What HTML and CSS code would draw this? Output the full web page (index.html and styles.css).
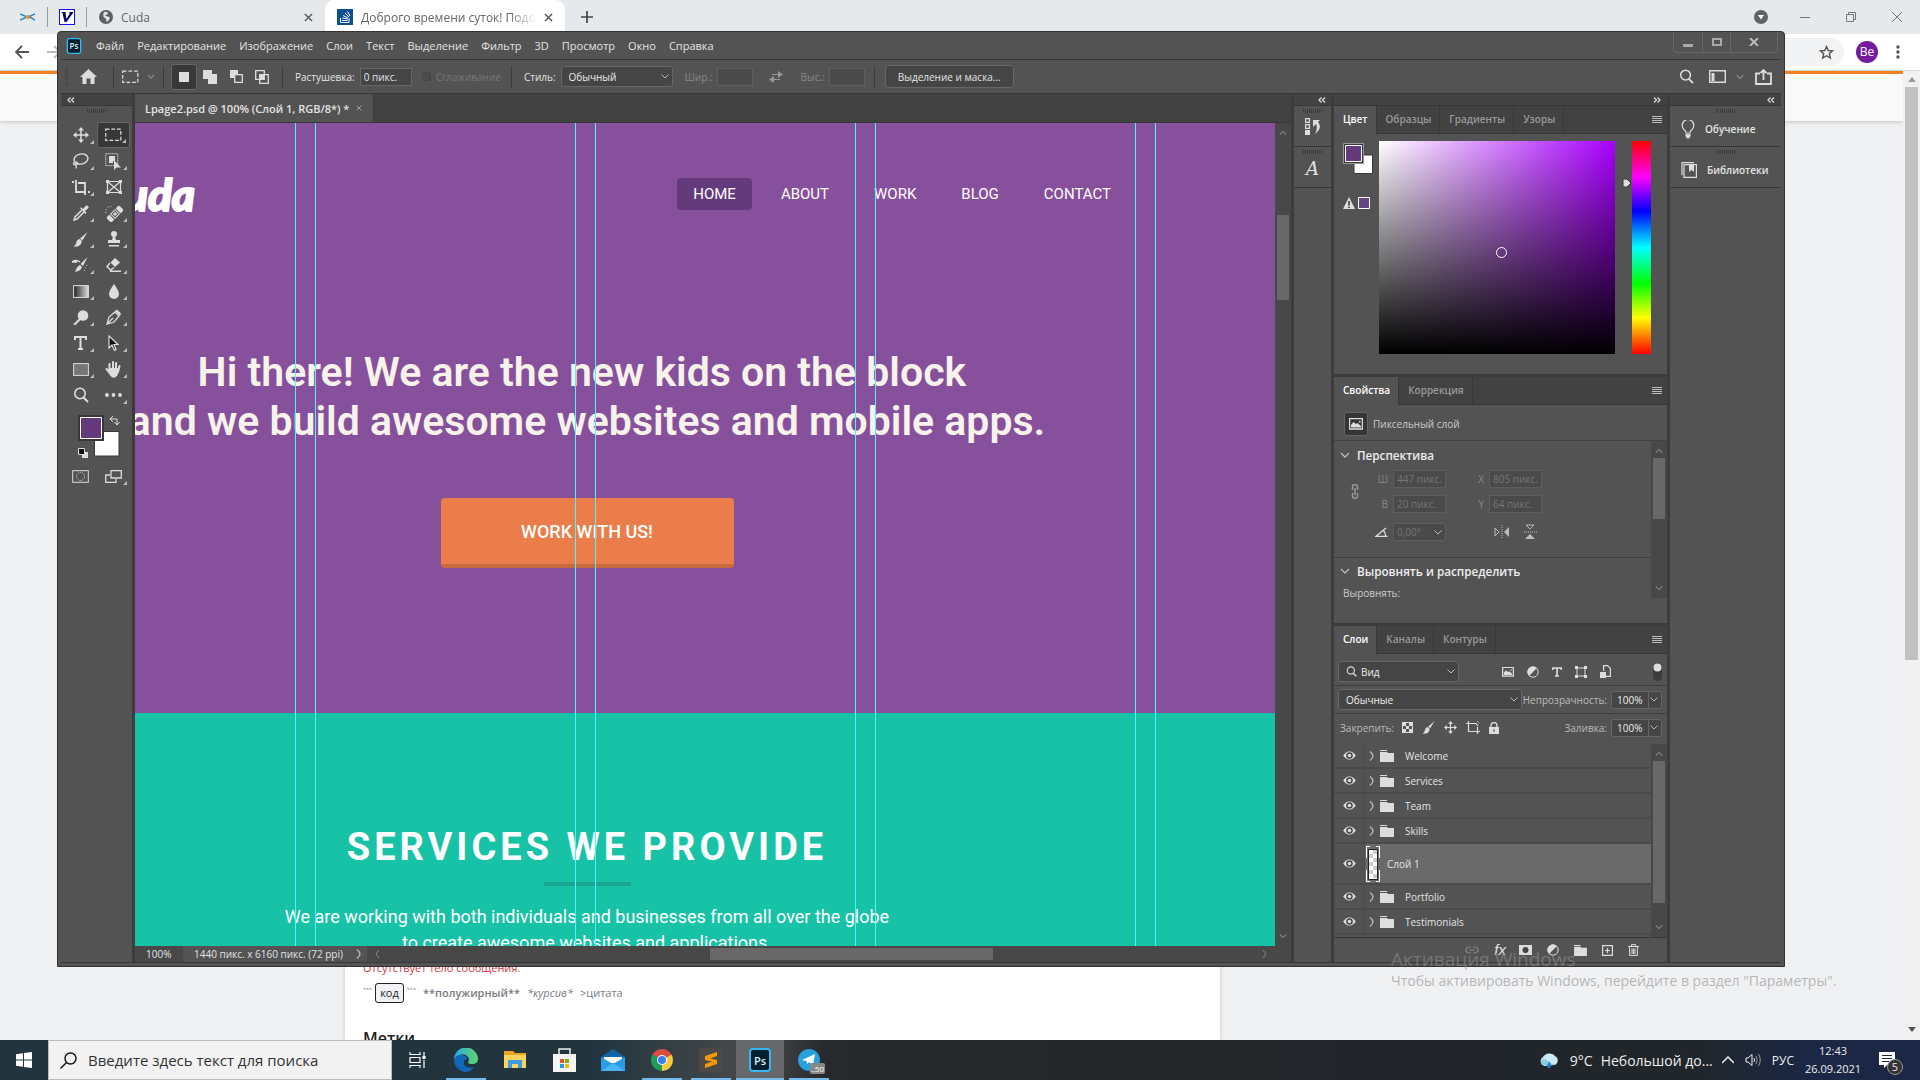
FILE: index.html
```html
<!DOCTYPE html>
<html lang="ru">
<head>
<meta charset="utf-8">
<title>Lpage2.psd</title>
<link rel="stylesheet" href="styles.css">
</head>
<body>
<svg class="defs" aria-hidden="true">
  <defs>
    <symbol id="eye" viewBox="0 0 14 10"><path d="M0 5Q3.500 0 7 .5Q10.500 0 14 5Q10.500 10 7 9.500Q3.500 10 0 5Z" fill="#ddd"/><circle cx="7" cy="5" r="3.600" fill="#454545"/><circle cx="7" cy="5" r="2" fill="#ddd"/></symbol>
    <symbol id="folder" viewBox="0 0 14 12"><path d="M0 0H7V1H0ZM0 2H7L8 3H14V12H0Z" fill="#ddd"/></symbol>
    <symbol id="chev-r" viewBox="0 0 6 10"><path d="M1 .5Q4 3 4 5Q4 7 1 9.500" fill="none" stroke="#bbb" stroke-width="1.300"/></symbol>
    <symbol id="chev-d" viewBox="0 0 10 6"><path d="M1 1L5 5L9 1" fill="none" stroke="currentColor" stroke-width="1.300"/></symbol>
    <symbol id="chev-u" viewBox="0 0 10 6"><path d="M1 5L5 1L9 5" fill="none" stroke="currentColor" stroke-width="1.300"/></symbol>
    <symbol id="dbl-l" viewBox="0 0 8 6"><path d="M3.500 .5L1 3L3.500 5.500M7 .5L4.500 3L7 5.500" fill="none" stroke="#ddd" stroke-width="1.300"/></symbol>
    <symbol id="dbl-r" viewBox="0 0 8 6"><path d="M1 .5L3.500 3L1 5.500M4.500 .5L7 3L4.500 5.500" fill="none" stroke="#ddd" stroke-width="1.300"/></symbol>
    <symbol id="burger" viewBox="0 0 10 8"><path d="M0 .5H10M0 2.500H10M0 4.500H10M0 6.500H10" stroke="#bbb"/></symbol>
    <symbol id="marquee" viewBox="0 0 18 14"><rect x=".75" y=".75" width="16" height="12" fill="none" stroke="#ddd" stroke-width="1.300" stroke-dasharray="4 2"/></symbol>
    <symbol id="brush" viewBox="0 0 16 16"><path d="M15.500 0L10 9L7.500 7ZM7 7.500L9.500 9.700Q9 14 5 15.500L.5 15.800Q3 14 3.500 11.500Q4 8 7 7.500Z" fill="#ddd"/></symbol>
    <symbol id="move" viewBox="0 0 16 16"><path d="M8 2V14M2 8H14" stroke="#ddd" stroke-width="1.500"/><path d="M8 0L11 3.500H5ZM8 16L11 12.500H5ZM0 8L3.500 5V11ZM16 8L12.500 5V11Z" fill="#ddd"/></symbol>
    <symbol id="picture" viewBox="0 0 14 12"><path d="M.5 .5H13.500V11H.5Z" fill="none" stroke="#ddd" stroke-width="1.500"/><path d="M2 9.500V7L4.500 4L7 6L8.500 5L12 8V9.500ZM10 3H11.500V4.500H10Z" fill="#ddd"/></symbol>
    <symbol id="half" viewBox="0 0 12 12"><circle cx="6" cy="6" r="5.200" fill="none" stroke="#ddd"/><path d="M9.900 2.100A5.500 5.500 0 0 0 2.100 9.900Z" fill="#ddd"/></symbol>
    <symbol id="search" viewBox="0 0 16 16"><circle cx="7" cy="6.500" r="5.200" fill="none" stroke="currentColor" stroke-width="1.600"/><path d="M10.500 10.500L15 15" stroke="currentColor" stroke-width="2"/></symbol>
    <symbol id="x" viewBox="0 0 10 10"><path d="M1 1L9 9M9 1L1 9" stroke="currentColor" stroke-width="1.500"/></symbol>
    <symbol id="ps" viewBox="0 0 22 24"><rect x="1" y="1" width="20" height="22" rx="3" fill="#001e2b" stroke="#31b8f5" stroke-width="2"/></symbol>
  </defs>
</svg>

<div class="desktop">
  <main class="browser">
    <div class="tabstrip">
      <span class="pin pin-first"><svg width="15" height="10" viewBox="0 0 15 10"><path d="M0 2L6 4.500M0 8L6 5.500" stroke="#2c8ac7" stroke-width="1.500"/><path d="M15 2L9 4.500L15 8" stroke="#2c8ac7" stroke-width="1.500" fill="none"/><circle cx="8" cy="5" r="2" fill="#ee8a2c"/></svg></span>
      <span class="pin"><svg width="16" height="16" viewBox="0 0 16 16"><rect x=".5" y=".5" width="15" height="15" fill="#fff" stroke="#11e"/><path d="M2 3H7L6.500 4L7.500 10L11 4L9.500 3H14V4L7.500 13H5.500L3.500 4Z" fill="#007"/></svg></span>
      <a class="tab" href="#cuda"><svg width="14" height="14" viewBox="0 0 14 14"><circle cx="7" cy="7" r="7" fill="#5b5f63"/><path d="M5 2Q9 1 9 4Q6 5 6 6Q10 6 11 8Q10 11 7 12Q8 9 6 8Q3 7 5 2Z" fill="#dfe3e6"/></svg><span class="tab-title">Cuda</span><svg class="tab-x" width="9" height="9"><use href="#x"/></svg></a>
      <a class="tab tab-active" href="#so"><svg width="16" height="16" viewBox="0 0 16 16"><rect width="16" height="16" fill="#0a5194"/><path d="M3.500 9V13.500H12V9M5 11.500H10.500M5.200 9L10.700 10M6 6.500L11 9M8 4L12 8M10.500 2.500L13 7" stroke="#fff" fill="none"/></svg><span class="tab-title fade">Доброго времени суток! Подска</span><svg class="tab-x" width="9" height="9"><use href="#x"/></svg></a>
      <button class="new-tab" aria-label="Новая вкладка"><svg width="12" height="12" viewBox="0 0 12 12"><path d="M6 0V12M0 6H12" stroke="#444" stroke-width="1.700"/></svg></button>
      <div class="win-controls">
        <svg width="14" height="14" viewBox="0 0 14 14"><circle cx="7" cy="7" r="7" fill="#5f6368"/><path d="M4 5H10L7 9.500Z" fill="#fff"/></svg>
        <svg width="10" height="10" viewBox="0 0 10 10"><path d="M0 5.500H10" stroke="#777"/></svg>
        <svg width="10" height="10" viewBox="0 0 10 10"><path d="M.5 2.500H7.500V9.500H.5ZM2.500 2.500V.5H9.500V7.500H7.500" fill="none" stroke="#777"/></svg>
        <svg width="10" height="10" viewBox="0 0 10 10"><path d="M0 0L10 10M10 0L0 10" stroke="#777"/></svg>
      </div>
    </div>
    <div class="toolbar">
      <svg width="14" height="14" viewBox="0 0 14 14"><path d="M14 7H1.500M7 1L1 7L7 13" fill="none" stroke="#555" stroke-width="1.800"/></svg>
      <svg width="14" height="14" viewBox="0 0 14 14"><path d="M0 7H12.500M7 1L13 7L7 13" fill="none" stroke="#bbb" stroke-width="1.800"/></svg>
      <div class="omnibox"><svg width="15" height="15" viewBox="0 0 15 15"><path d="M7.500 1.500L9.200 5.500L13.500 5.900L10.300 8.700L11.300 13L7.500 10.700L3.700 13L4.700 8.700L1.500 5.900L5.800 5.500Z" fill="none" stroke="#555" stroke-width="1.400"/></svg></div>
      <span class="avatar">Be</span>
      <svg width="4" height="14" viewBox="0 0 4 14"><g fill="#555"><circle cx="2" cy="2" r="1.700"/><circle cx="2" cy="7" r="1.700"/><circle cx="2" cy="12" r="1.700"/></g></svg>
    </div>
    <div class="viewport">
      <div class="site">
        <div class="site-bar"></div>
        <article class="post">
          <p class="error">Отсутствует тело сообщения.</p>
          <p class="hints"><span>```</span><kbd>код</kbd><span>```</span><b>**полужирный**</b><i>*курсив*</i><span>&gt;цитата</span></p>
          <h2>Метки</h2>
        </article>
      </div>
      <div class="scroll"><span class="arr-up"></span><span class="scroll-thumb"></span><span class="arr-down"></span></div>
    </div>
  </main>

  <footer class="taskbar">
    <button class="start" aria-label="Пуск"><svg width="16" height="16" viewBox="0 0 16 16"><path d="M0 2.300L7 1.300V7.500H0ZM8 1.100L16 0V7.500H8ZM0 8.500H7V14.700L0 13.700ZM8 8.500H16V16L8 14.900Z" fill="#fff"/></svg></button>
    <label class="search"><svg width="17" height="17" viewBox="0 0 17 17"><circle cx="10.500" cy="6.500" r="5.500" fill="none" stroke="#111" stroke-width="1.400"/><path d="M6.500 10.500L.5 16.500" stroke="#111" stroke-width="1.400"/></svg><input type="text" placeholder="Введите здесь текст для поиска" aria-label="Поиск"></label>
    <div class="apps">
      <button class="app" aria-label="Задачи"><svg width="17" height="16" viewBox="0 0 17 16"><path d="M1 0V3M11 0V3M1 2.500H11M1 5.500H11V10.500H1ZM1 16V13.500H11V16M15 0V4M15 8V16" fill="none" stroke="#fff" stroke-width="1.200"/><path d="M13.500 4H16.500V7H13.500Z" fill="#fff"/></svg></button>
      <button class="app run" aria-label="Edge"><svg width="24" height="24" viewBox="0 0 24 24"><defs><linearGradient id="eg" x2="1"><stop stop-color="#2aa8e6"/><stop offset="1" stop-color="#60d66a"/></linearGradient></defs><path d="M0 12A12 12 0 0 1 24 11Q24 16 18 16Q14 16 14 14Q16 12 14 9Q11 5 6 7Q1 9 0 12Z" fill="url(#eg)"/><path d="M0 12Q2 6 9 7Q13 8 13 11Q9 12 10 16Q12 21 20 19Q17 24 11 24Q1 22 0 12Z" fill="#1268b8"/></svg></button>
      <button class="app" aria-label="Проводник"><svg width="22" height="20" viewBox="0 0 22 20"><path d="M0 1H9L11 3H22V18H0Z" fill="#e8a520"/><path d="M0 5H22V18H0Z" fill="#fcd462"/><path d="M4 18V10H18V18H14V14H8V18Z" fill="#3f9be0"/></svg></button>
      <button class="app" aria-label="Магазин"><svg width="23" height="24" viewBox="0 0 23 24"><path d="M6 6V1H17V6" fill="none" stroke="#eee" stroke-width="1.500"/><path d="M0 6H23V24H0Z" fill="#f4f4f4"/><path d="M7 11H11V15H7Z" fill="#e94f2e"/><path d="M12 11H16V15H12Z" fill="#7db700"/><path d="M7 16H11V20H7Z" fill="#1a9fe8"/><path d="M12 16H16V20H12Z" fill="#fcb900"/></svg></button>
      <button class="app" aria-label="Почта"><svg width="24" height="22" viewBox="0 0 24 22"><path d="M0 8L12 0L24 8V22H0Z" fill="#1465a8"/><path d="M3 8H21V14H3Z" fill="#fff"/><path d="M0 8L12 15L24 8V22H0Z" fill="#2b9de6"/><path d="M0 22L12 14L24 22Z" fill="#48b5f0"/></svg></button>
      <button class="app run" aria-label="Chrome"><svg width="22" height="22" viewBox="0 0 22 22"><path d="M11 11L1.500 5.500A11 11 0 0 1 20.500 5.500Z" fill="#dd4b3e"/><path d="M11 11L20.500 5.500A11 11 0 0 1 11 22Z" fill="#fccb3c"/><path d="M11 11L11 22A11 11 0 0 1 1.500 5.500Z" fill="#1f9d58"/><circle cx="11" cy="11" r="5" fill="#fff"/><circle cx="11" cy="11" r="4" fill="#3c7ff0"/></svg></button>
      <button class="app run" aria-label="Sublime"><svg width="24" height="24" viewBox="0 0 24 24"><rect width="24" height="24" rx="2" fill="#4a4a4a"/><path d="M6 8L18 4V8L11 10.500L18 12V16L6 20V16L13 13.500L6 12Z" fill="#ff9800"/></svg></button>
      <button class="app run current" aria-label="Photoshop"><span class="ps-logo"><svg width="22" height="24"><use href="#ps"/></svg><span class="ps-text">Ps</span></span></button>
      <button class="app run" aria-label="Telegram"><svg width="22" height="22" viewBox="0 0 22 22"><circle cx="11" cy="11" r="11" fill="#2aa0dc"/><path d="M4 11L17 5L15 16L11 13L9 15L8.500 12Z" fill="#fff"/></svg><span class="count">..50</span></button>
    </div>
    <div class="tray">
      <svg width="21" height="18" viewBox="0 0 21 18"><path d="M5 15A5 5 0 0 1 4 6A7 6 0 0 1 16 5A5 5 0 0 1 16 14Z" fill="#c9e9f5"/><path d="M3 14A4 4 0 0 1 4 8Q8 8 9 11L17 14Z" fill="#8ec9e4"/><path d="M10 10Q13 14 11 17Q8 17 8 15Z" fill="#1b7fd1"/></svg>
      <span class="temp">9°C</span><span class="weather">Небольшой до...</span>
      <svg class="up" width="12" height="8" viewBox="0 0 12 8"><path d="M0 7L6 1L12 7" fill="none" stroke="#eee" stroke-width="1.500"/></svg>
      <svg width="17" height="14" viewBox="0 0 17 14"><path d="M1 5H3L7 1.500V12.500L3 9H1Z" fill="none" stroke="#eee"/><path d="M9 5Q10 7 9 9" fill="none" stroke="#eee"/><path d="M11 3Q13.500 7 11 11M13.500 1Q17 7 13.500 13" fill="none" stroke="#999"/></svg>
      <span class="lang">РУС</span>
      <span class="clock"><span>12:43</span><span>26.09.2021</span></span>
      <span class="notify"><svg width="16" height="16" viewBox="0 0 16 16"><path d="M0 0H16V13H8L5 16V13H0Z" fill="#fff"/><path d="M3 3.500H13M3 6.500H13M3 9.500H10" stroke="#1b2540" stroke-width="1.200"/></svg><span class="badge">5</span></span>
    </div>
  </footer>

  <section class="ps">
    <header class="menubar">
      <span class="ps-logo small"><svg width="16" height="16"><use href="#ps"/></svg><span class="ps-text">Ps</span></span>
      <nav class="menu"><a href="#f">Файл</a><a href="#e">Редактирование</a><a href="#i">Изображение</a><a href="#l">Слои</a><a href="#t">Текст</a><a href="#s">Выделение</a><a href="#fi">Фильтр</a><a href="#d">3D</a><a href="#v">Просмотр</a><a href="#w">Окно</a><a href="#h">Справка</a></nav>
      <div class="ps-win">
        <button aria-label="Свернуть"><svg width="10" height="10" viewBox="0 0 10 10"><path d="M0 7H10V10H0Z" fill="#aaa"/></svg></button>
        <button aria-label="Развернуть"><svg width="10" height="8" viewBox="0 0 10 8"><path d="M1 1H9V7H1Z" fill="none" stroke="#aaa" stroke-width="2"/></svg></button>
        <button class="wide" aria-label="Закрыть"><svg width="10" height="8" viewBox="0 0 10 8"><path d="M1 0L9 8M9 0L1 8" stroke="#bbb" stroke-width="2"/></svg></button>
      </div>
    </header>
    <div class="options">
      <span class="vgrip"></span>
      <button class="icon-btn home" aria-label="Домой"><svg width="17" height="15" viewBox="0 0 17 15"><path d="M8.500 0L17 8H14.500V15H10.500V9.500H6.500V15H2.500V8H0Z" fill="#ddd"/></svg></button>
      <span class="sep"></span>
      <button class="icon-btn mar" aria-label="Область"><svg width="17" height="14"><use href="#marquee"/></svg><svg class="dim" width="8" height="5"><use href="#chev-d"/></svg></button>
      <span class="sep"></span>
      <div class="modes">
        <button class="on" aria-label="Новая"><svg width="10" height="10"><rect width="10" height="10" fill="#ddd"/></svg></button>
        <button aria-label="Добавить"><svg width="14" height="14" viewBox="0 0 14 14"><path d="M0 0H9V4H14V14H5V9H0Z" fill="#ddd"/></svg></button>
        <button aria-label="Вычесть"><svg width="13" height="13" viewBox="0 0 13 13"><path d="M0 0H8V4H4V8H0Z" fill="#ddd"/><path d="M4.700 4.700H12.300V12.300H4.700Z" fill="none" stroke="#ddd" stroke-width="1.300"/></svg></button>
        <button aria-label="Пересечение"><svg width="14" height="14" viewBox="0 0 14 14"><path d="M.7 .7H9.300V9.300H.7ZM4.700 4.700H13.300V13.300H4.700Z" fill="none" stroke="#ddd" stroke-width="1.300"/><path d="M5 5H9V9H5Z" fill="#ddd"/></svg></button>
      </div>
      <span class="sep"></span>
      <label class="opt">Растушевка:<input class="field w52" type="text" value="0 пикс."></label>
      <label class="opt smooth"><input type="checkbox" disabled>Сглаживание</label>
      <span class="sep"></span>
      <label class="opt">Стиль:<select class="drop w112"><option>Обычный</option></select></label>
      <label class="opt off">Шир.:<input class="field w36" type="text" disabled></label>
      <svg class="swap" width="14" height="12" viewBox="0 0 14 12"><path d="M3 3H9V0L14 3.500L9 7V4H3ZM11 8H5V5L0 8.500L5 12V9H11Z" fill="#999"/></svg>
      <label class="opt off">Выс.:<input class="field w36" type="text" disabled></label>
      <span class="sep"></span>
      <button class="mask">Выделение и маска...</button>
      <div class="opt-right">
        <svg width="15" height="15"><use href="#search"/></svg>
        <svg width="17" height="13" viewBox="0 0 17 13"><path d="M.7 .7H16.300V12.300H.7Z" fill="none" stroke="#ddd" stroke-width="1.400"/><path d="M2.500 3H5.500V11H2.500Z" fill="#ddd"/></svg>
        <svg class="dim ws" width="8" height="6"><use href="#chev-d"/></svg>
        <svg width="17" height="16" viewBox="0 0 17 16"><path d="M5 4.500H1V15H16V4.500H12M8.500 11V2M5.500 4L8.500 1L11.500 4" fill="none" stroke="#ddd" stroke-width="1.800"/></svg>
      </div>
    </div>

    <div class="work">
      <aside class="tools">
        <div class="collapse left"><svg width="8" height="6"><use href="#dbl-l"/></svg></div>
        <div class="grip"></div>
        <div class="toolgrid">
          <button class="tool" aria-label="Перемещение"><svg width="16" height="16"><use href="#move"/></svg></button>
          <button class="tool on" aria-label="Прямоугольная область"><svg width="17" height="14"><use href="#marquee"/></svg></button>
          <button class="tool" aria-label="Лассо"><svg width="17" height="16" viewBox="0 0 17 16"><ellipse cx="9" cy="6" rx="7" ry="5" transform="rotate(-12 9 6)" fill="none" stroke="#ddd" stroke-width="1.400"/><path d="M2 9Q0 12 4 12Q6 12 5 9Q3 9 3 12Q5 13 4 15.500" fill="none" stroke="#ddd" stroke-width="1.200"/></svg></button>
          <button class="tool" aria-label="Выделение объектов"><svg width="17" height="17" viewBox="0 0 17 17"><rect x=".7" y=".7" width="12" height="12" fill="none" stroke="#ddd" stroke-width="1.200" stroke-dasharray="1 1"/><path d="M4 3H10V8H8V10H4Z" fill="#ddd"/><path d="M9 7V17L11.500 14.500H16Z" fill="#ddd"/></svg></button>
          <button class="tool" aria-label="Рамка"><svg width="18" height="15" viewBox="0 0 18 15"><path d="M0 2H2M4 0V12H14M6 3H13V15M16 12H18" fill="none" stroke="#ddd" stroke-width="1.800"/></svg></button>
          <button class="tool plain" aria-label="Кадр"><svg width="16" height="14" viewBox="0 0 16 14"><path d="M1.500 1.500H14.500V12.500H1.500ZM1.500 1.500L14.500 12.500M14.500 1.500L1.500 12.500" fill="none" stroke="#ddd" stroke-width="1.200"/><path d="M0 0H3V3H0ZM13 0H16V3H13ZM0 11H3V14H0ZM13 11H16V14H13Z" fill="#ddd"/></svg></button>
          <button class="tool" aria-label="Пипетка"><svg width="16" height="16" viewBox="0 0 16 16"><path d="M9 5L2 12L1 15L4 14L11 7" fill="none" stroke="#ddd" stroke-width="1.500"/><path d="M7 3L8.500 2.500L10 4L13 .5Q16 0 15.500 3L12 6L13.500 7.500L12.500 9Z" fill="#ddd"/></svg></button>
          <button class="tool" aria-label="Восстановление"><svg width="18" height="17" viewBox="0 0 18 17"><g transform="rotate(-45 10 9)"><rect x="1" y="5.500" width="18" height="7" rx="1.500" fill="#ddd"/><path d="M6 5V13M14 5V13" stroke="#535353"/><path d="M8 7H12V11H8Z" fill="none" stroke="#535353"/></g><path d="M1 8Q0 1 7 1.500" fill="none" stroke="#ddd" stroke-dasharray="1 1.500"/></svg></button>
          <button class="tool" aria-label="Кисть"><svg width="15" height="15"><use href="#brush"/></svg></button>
          <button class="tool" aria-label="Штамп"><svg width="14" height="16" viewBox="0 0 14 16"><circle cx="7" cy="3" r="3" fill="#ddd"/><path d="M6 5H8L9 9H13V12H1V9H5ZM2 14H12V15.500H2Z" fill="#ddd"/></svg></button>
          <button class="tool" aria-label="Архивная кисть"><svg width="17" height="16" viewBox="0 0 17 16"><path d="M15.500 0L11 9L8.500 7ZM8 8L10 10Q9 14 3 15Q5 9 8 8Z" fill="#ddd"/><path d="M0 5Q4 2 8 5M0 5H5" fill="none" stroke="#ddd" stroke-width="1.500"/><path d="M12 14L16 6" stroke="#ddd" stroke-dasharray="1 2"/></svg></button>
          <button class="tool" aria-label="Ластик"><svg width="16" height="14" viewBox="0 0 16 14"><path d="M9 0L14 4.500L9 9L4.500 4.500Z" fill="#ddd"/><path d="M4 5L1 8.500L4.500 12L8 9.500M4 13.300H15" fill="none" stroke="#ddd" stroke-width="1.400"/></svg></button>
          <button class="tool" aria-label="Градиент"><svg width="16" height="13" viewBox="0 0 16 13"><defs><linearGradient id="gr"><stop stop-color="#222"/><stop offset="1" stop-color="#ddd"/></linearGradient></defs><rect x=".6" y=".6" width="14.800" height="11.800" fill="url(#gr)" stroke="#ddd"/></svg></button>
          <button class="tool" aria-label="Размытие"><svg width="12" height="15" viewBox="0 0 12 15"><path d="M6 0Q11 7 11 10A5 5 0 0 1 1 10Q1 7 6 0Z" fill="#ddd"/></svg></button>
          <button class="tool" aria-label="Осветлитель"><svg width="16" height="15" viewBox="0 0 16 15"><circle cx="10" cy="5.500" r="5.300" fill="#ddd"/><path d="M7 9L1 15" stroke="#ddd" stroke-width="2"/></svg></button>
          <button class="tool" aria-label="Перо"><svg width="16" height="16" viewBox="0 0 16 16"><path d="M1 15L3 8L9 3L13 7L8 13ZM1 15L7 9" fill="none" stroke="#ddd" stroke-width="1.300"/><path d="M9 2L11 .5L15 4.500L14 7Z" fill="#ddd"/></svg></button>
          <button class="tool" aria-label="Текст"><svg width="13" height="14" viewBox="0 0 13 14"><path d="M1 4V1H12V4M6.500 1V13M4 13H9" fill="none" stroke="#ddd" stroke-width="2"/></svg></button>
          <button class="tool" aria-label="Стрелка"><svg width="11" height="16" viewBox="0 0 11 16"><path d="M1 1V13L4 10L6.500 15.500L8 14.500L6 9.500H10Z" fill="#111" stroke="#ddd" stroke-width="1.200"/></svg></button>
          <button class="tool" aria-label="Прямоугольник"><svg width="16" height="13" viewBox="0 0 16 13"><rect x=".6" y=".6" width="14.800" height="11.800" fill="#777" stroke="#ddd"/></svg></button>
          <button class="tool" aria-label="Рука"><svg width="17" height="17" viewBox="0 0 17 17"><path d="M4.500 3V10M8 1V9M11 2V9M14.500 5L13 11M1.500 8L5 12" stroke="#ddd" stroke-width="2" stroke-linecap="round"/><path d="M4 7H14L13 13Q12 16 10 16.500H7Q5 15 3 11Z" fill="#ddd"/></svg></button>
          <button class="tool plain" aria-label="Масштаб"><svg width="16" height="16"><use href="#search" color="#ddd"/></svg></button>
          <button class="tool" aria-label="Ещё"><svg width="17" height="4" viewBox="0 0 17 4"><g fill="#ddd"><circle cx="2" cy="2" r="1.900"/><circle cx="8.500" cy="2" r="1.900"/><circle cx="15" cy="2" r="1.900"/></g></svg></button>
        </div>
        <svg class="swatches" width="42" height="46" viewBox="0 0 42 46"><path d="M16.500 17.500H41V42H16.500Z" fill="#fff" stroke="#383838"/><path d="M1 2H25V26H1Z" fill="#643a7c" stroke="#383838" stroke-width="2"/><path d="M2.500 3.500H23.500V24.500H2.500Z" fill="none" stroke="#fff"/><path d="M33 5H39V10M35 2L32 5L35 8M36.500 8L39 11L41.500 8" fill="none" stroke="#ddd"/><path d="M4 38H10V44H4Z" fill="#ddd"/><path d="M.5 34.500H6.500V40.500H.5Z" fill="#111" stroke="#ddd"/></svg>
        <div class="toolgrid">
          <button class="tool plain" aria-label="Быстрая маска"><svg width="17" height="13" viewBox="0 0 17 13"><rect x=".7" y=".7" width="15.600" height="11.600" fill="none" stroke="#ddd"/><circle cx="8.500" cy="6.500" r="4" fill="none" stroke="#ddd" stroke-dasharray="1 1"/></svg></button>
          <button class="tool" aria-label="Экран"><svg width="17" height="13" viewBox="0 0 17 13"><path d="M6 .7H16.300V8H6ZM5 5H.7V12.300H11V9" fill="none" stroke="#ddd" stroke-width="1.300"/></svg></button>
        </div>
      </aside>

      <div class="doc">
        <div class="doc-tabs"><button class="doc-tab">Lpage2.psd @ 100% (Слой 1, RGB/8*) *<svg width="6" height="6"><use href="#x"/></svg></button></div>
        <div class="doc-main">
          <div class="canvas">
            <div class="artboard">
              <section class="hero">
                <div class="site-head"><span class="logo">Cuda</span><nav class="site-nav"><a class="home-link" href="#home">HOME</a><a href="#about">ABOUT</a><a href="#work">WORK</a><a href="#blog">BLOG</a><a href="#contact">CONTACT</a></nav></div>
                <h1>Hi there! We are the new kids on the block&nbsp;<br>and we build awesome websites and mobile apps.</h1>
                <button class="cta">WORK WITH US!</button>
              </section>
              <section class="services">
                <h2>SERVICES WE PROVIDE</h2>
                <hr>
                <p>We are working with both individuals and businesses from all over the globe<br>to create awesome websites and applications.</p>
              </section>
            </div>
            <div class="guides"></div>
          </div>
          <div class="vscroll"><svg width="8" height="6"><use href="#chev-u"/></svg><span class="vthumb"></span><svg class="last" width="8" height="6"><use href="#chev-d"/></svg></div>
        </div>
        <div class="status"><span class="zoom">100%</span><span class="dims">1440 пикс. x 6160 пикс. (72 ppi)<svg width="6" height="10"><use href="#chev-r"/></svg></span><div class="hscroll"><svg width="5" height="8" viewBox="0 0 5 8"><path d="M4 0L1 4L4 8" fill="none" stroke="#888"/></svg><span class="hthumb"></span><svg width="5" height="8" viewBox="0 0 5 8"><path d="M1 0L4 4L1 8" fill="none" stroke="#888"/></svg></div></div>
      </div>

      <aside class="strip">
        <div class="collapse"><svg width="8" height="6"><use href="#dbl-l"/></svg></div>
        <div class="dock"><div class="grip"></div><svg width="16" height="17" viewBox="0 0 16 17"><path d="M.6 .6H4.400V4.400H.6ZM.6 6.600H4.400V10.400H.6Z" fill="none" stroke="#ddd" stroke-width="1.200"/><path d="M0 12H5V17H0Z" fill="#ddd"/><path d="M8 2H15L13 4Q18 10 10 16Q13 10 11 6L8 9Z" fill="#ddd"/></svg></div>
        <div class="dock"><div class="grip"></div><span class="glyph-a">A</span></div>
      </aside>

      <div class="panels">
        <div class="collapse right"><svg width="8" height="6"><use href="#dbl-r"/></svg></div>
        <section class="panel color">
          <div class="tabs"><button class="on">Цвет</button><button>Образцы</button><button>Градиенты</button><button>Узоры</button><svg width="10" height="8"><use href="#burger"/></svg></div>
          <div class="picker">
            <svg class="picker-sw" width="32" height="70" viewBox="0 0 32 70"><path d="M11 14H29.500V32.500H11Z" fill="#fff" stroke="#383838"/><path d="M.5 2.500H20.500V22.500H.5Z" fill="#383838" stroke="#999"/><path d="M2.500 4.500H18.500V20.500H2.500Z" fill="#643a7c" stroke="#fff"/><path d="M6 56L12 68H0Z" fill="#ddd"/><path d="M6 60V64.500M6 65.500V67" stroke="#333" stroke-width="1.500"/><path d="M15.500 56.500H26.500V67.500H15.500Z" fill="#644583" stroke="#fff"/></svg>
            <div class="field2d"><span class="dot"></span></div>
            <svg class="hue-arrow" width="9" height="10" viewBox="0 0 9 10"><path d="M1 1H5L9 5L5 9H1Z" fill="#ddd" stroke="#383838"/></svg>
            <div class="hue"></div>
          </div>
        </section>
        <section class="panel props">
          <div class="tabs"><button class="on">Свойства</button><button>Коррекция</button><svg width="10" height="8"><use href="#burger"/></svg></div>
          <div class="kind"><span class="kind-icon"><svg width="14" height="12"><use href="#picture"/></svg></span>Пиксельный слой</div>
          <div class="props-body">
            <div class="props-list">
              <h3><svg width="10" height="6"><use href="#chev-d"/></svg>Перспектива</h3>
              <div class="xy">
                <svg class="chain" width="8" height="15" viewBox="0 0 8 15"><path d="M1.500 6V3A2.500 2.500 0 0 1 6.500 3V6M1.500 9V12A2.500 2.500 0 0 0 6.500 12V9M4 4V11" fill="none" stroke="#999" stroke-width="1.500"/></svg>
                <label for="pw">Ш</label><input id="pw" class="field" value="447 пикс." disabled><label for="px">X</label><input id="px" class="field" value="805 пикс." disabled>
                <label for="ph">В</label><input id="ph" class="field" value="20 пикс." disabled><label for="py">Y</label><input id="py" class="field" value="64 пикс." disabled>
                <svg class="angle" width="13" height="10" viewBox="0 0 13 10"><path d="M12.500 9.300H1L11 1M8 3Q11 6 10.500 9" fill="none" stroke="#ddd" stroke-width="1.300"/></svg><select class="drop angle-sel" disabled aria-label="Угол"><option>0,00°</option></select>
                <svg class="flip" width="46" height="16" viewBox="0 0 46 16"><path d="M1 4L5 8L1 12Z" fill="none" stroke="#bbb"/><path d="M15 3V13L10 8Z" fill="#bbb"/><path d="M8 1V15" stroke="#bbb" stroke-dasharray="1 1"/><path d="M32 1H40L36 5Z" fill="none" stroke="#bbb"/><path d="M31 15H41L36 10Z" fill="#bbb"/><path d="M30 8H43" stroke="#bbb" stroke-dasharray="1 1"/></svg>
              </div>
              <h3 class="second"><svg width="10" height="6"><use href="#chev-d"/></svg>Выровнять и распределить</h3>
              <p class="align">Выровнять:</p>
            </div>
            <div class="vscroll slim"><svg width="8" height="6"><use href="#chev-u"/></svg><span class="vthumb t1"></span><svg class="last" width="8" height="6"><use href="#chev-d"/></svg></div>
          </div>
        </section>
        <section class="panel layers">
          <div class="tabs"><button class="on">Слои</button><button>Каналы</button><button>Контуры</button><svg width="10" height="8"><use href="#burger"/></svg></div>
          <div class="lrow filter">
            <div class="kindsel"><svg width="11" height="11"><use href="#search"/></svg><select class="drop" aria-label="Фильтр слоёв"><option>Вид</option></select></div>
            <div class="filters">
              <svg width="12" height="10"><use href="#picture"/></svg>
              <svg width="12" height="12"><use href="#half"/></svg>
              <svg width="10" height="10" viewBox="0 0 10 10"><path d="M.7 3V1H9.300V3M5 1V9M3 9H7" fill="none" stroke="#ddd" stroke-width="1.700"/></svg>
              <svg width="12" height="12" viewBox="0 0 12 12"><path d="M2 2H10V10H2Z" fill="none" stroke="#ddd"/><path d="M0 0H3V3H0ZM9 0H12V3H9ZM0 9H3V12H0ZM9 9H12V12H9Z" fill="#ddd"/></svg>
              <svg width="11" height="13" viewBox="0 0 11 13"><path d="M3.600 6V.6H7.500L10.400 3.500V11.400H6" fill="none" stroke="#ddd" stroke-width="1.200"/><path d="M0 7H6V13H0Z" fill="#ddd"/></svg>
            </div>
            <svg width="9" height="18" viewBox="0 0 9 18"><rect width="9" height="18" rx="4.500" fill="#3c3c3c"/><circle cx="4.500" cy="4.500" r="4" fill="#ddd"/></svg>
          </div>
          <div class="lrow blend">
            <select class="drop" aria-label="Режим наложения"><option>Обычные</option></select>
            <label class="pct">Непрозрачность:<select class="drop"><option>100%</option></select></label>
          </div>
          <div class="lrow lock">
            <span>Закрепить:</span>
            <div class="locks">
              <svg width="11" height="11" viewBox="0 0 11 11"><rect x=".5" y=".5" width="10" height="10" fill="none" stroke="#ddd"/><path d="M1 1H4V4H1ZM7 1H10V4H7ZM4 4H7V7H4ZM1 7H4V10H1ZM7 7H10V10H7Z" fill="#ddd"/></svg>
              <svg width="13" height="13"><use href="#brush"/></svg>
              <svg width="13" height="13"><use href="#move"/></svg>
              <svg width="14" height="13" viewBox="0 0 14 13"><path d="M0 2.500H10L12 5M2.500 0V10.500H14M11.500 6V13" fill="none" stroke="#ddd" stroke-width="1.200"/><path d="M11 0L14 3" stroke="#ddd" stroke-dasharray="1 1"/></svg>
              <svg width="10" height="12" viewBox="0 0 10 12"><path d="M2 6V3.500A3 3 0 0 1 8 3.500V6" fill="none" stroke="#ddd" stroke-width="1.400"/><path d="M0 5H10V12H0ZM4.300 7.500V9.500H5.700V7.500Z" fill="#ddd" fill-rule="evenodd"/></svg>
            </div>
            <label class="pct">Заливка:<select class="drop"><option>100%</option></select></label>
          </div>
          <div class="layer-area">
            <ul class="layer-list">
              <li><span class="vis"><svg width="13" height="9"><use href="#eye"/></svg></span><svg width="6" height="10"><use href="#chev-r"/></svg><svg class="fold" width="14" height="12"><use href="#folder"/></svg>Welcome</li>
              <li><span class="vis"><svg width="13" height="9"><use href="#eye"/></svg></span><svg width="6" height="10"><use href="#chev-r"/></svg><svg class="fold" width="14" height="12"><use href="#folder"/></svg>Services</li>
              <li><span class="vis"><svg width="13" height="9"><use href="#eye"/></svg></span><svg width="6" height="10"><use href="#chev-r"/></svg><svg class="fold" width="14" height="12"><use href="#folder"/></svg>Team</li>
              <li><span class="vis"><svg width="13" height="9"><use href="#eye"/></svg></span><svg width="6" height="10"><use href="#chev-r"/></svg><svg class="fold" width="14" height="12"><use href="#folder"/></svg>Skills</li>
              <li class="selected"><span class="vis"><svg width="13" height="9"><use href="#eye"/></svg></span><svg class="thumb" width="14" height="36" viewBox="0 0 14 36"><path d="M2.500 3.500H11.500V33.500H2.500Z" fill="#fff" stroke="#222"/><path d="M3 8H7V12H3ZM7 4H11V8H7ZM7 12H11V16H7ZM3 16H7V20H3ZM7 20H11V24H7ZM3 24H7V28H3ZM7 28H11V32H7Z" fill="#ccc"/><path d="M.5 12V.5H4M10 .5H13.500V12M.5 24V35.500H4M10 35.500H13.500V24" fill="none" stroke="#fff"/></svg>Слой 1</li>
              <li><span class="vis"><svg width="13" height="9"><use href="#eye"/></svg></span><svg width="6" height="10"><use href="#chev-r"/></svg><svg class="fold" width="14" height="12"><use href="#folder"/></svg>Portfolio</li>
              <li><span class="vis"><svg width="13" height="9"><use href="#eye"/></svg></span><svg width="6" height="10"><use href="#chev-r"/></svg><svg class="fold" width="14" height="12"><use href="#folder"/></svg>Testimonials</li>
            </ul>
            <div class="vscroll slim"><svg width="8" height="6"><use href="#chev-u"/></svg><span class="vthumb t2"></span><svg class="last" width="8" height="6"><use href="#chev-d"/></svg></div>
          </div>
          <div class="layer-foot">
            <svg width="14" height="8" viewBox="0 0 14 8"><path d="M6 1H4A3 3 0 0 0 4 7H6M8 1H10A3 3 0 0 1 10 7H8M4 4H10" fill="none" stroke="#888" stroke-width="1.200"/></svg>
            <em>fx</em>
            <svg width="13" height="10" viewBox="0 0 13 10"><path d="M0 0H13V10H0Z" fill="#ddd"/><circle cx="6.500" cy="5" r="3" fill="#444"/></svg>
            <svg width="12" height="12"><use href="#half"/></svg>
            <svg width="13" height="11"><use href="#folder"/></svg>
            <svg width="11" height="11" viewBox="0 0 11 11"><path d="M.6 .6H10.400V10.400H.6ZM5.500 3V8M3 5.500H8" fill="none" stroke="#ddd" stroke-width="1.200"/></svg>
            <svg width="11" height="12" viewBox="0 0 11 12"><path d="M0 2.500H11M3.500 2V.6H7.500V2M1.600 3V11.400H9.400V3M4 4.500V10M5.500 4.500V10M7 4.500V10" fill="none" stroke="#ddd"/></svg>
          </div>
        </section>
      </div>

      <aside class="side">
        <div class="collapse right"><svg width="8" height="6"><use href="#dbl-l"/></svg></div>
        <div class="dock"><div class="grip"></div><button class="side-btn"><svg width="14" height="19" viewBox="0 0 14 19"><path d="M5 13Q5 11 3 9.500A5.800 5.800 0 1 1 11 9.500Q9 11 9 13Z" fill="none" stroke="#ddd" stroke-width="1.200"/><path d="M4.500 14H9.500V16L8 18.500H6L4.500 16Z" fill="#ddd"/></svg>Обучение</button></div>
        <div class="dock"><div class="grip"></div><button class="side-btn"><svg width="16" height="16" viewBox="0 0 16 16"><path d="M3 2.600H15.400V15.400H3Z" fill="none" stroke="#ddd" stroke-width="1.200"/><path d="M1 13V.6H13" fill="none" stroke="#ddd" stroke-width="1.200"/><path d="M8 3H13V10L10.500 8L8 10Z" fill="#ddd"/></svg>Библиотеки</button></div>
      </aside>
    </div>
  </section>

  <div class="watermark"><strong>Активация Windows</strong><span>Чтобы активировать Windows, перейдите в раздел "Параметры".</span></div>
</div>
</body>
</html>
```
FILE: styles.css
```css
* { box-sizing: border-box; }
body { margin: 0; font-family: "Open Sans", "Noto Sans", sans-serif; }
button, input, select { font: inherit; color: inherit; }
button { border: 0; padding: 0; background: none; }
a { color: inherit; text-decoration: none; }
h1, h2, h3, p, ul { margin: 0; padding: 0; font-weight: inherit; }
svg { display: block; flex: none; }
.defs { position: absolute; width: 0; height: 0; }

.desktop { position: relative; height: 100vh; min-height: 900px; display: flex; flex-direction: column; overflow: hidden; white-space: nowrap; }

/* Browser behind the editor */
.browser { flex: 1; min-height: 0; display: flex; flex-direction: column; }
.tabstrip { height: 34px; flex: none; display: flex; align-items: center; background: #e5e9ec; font-size: 12px; color: #666; }
.pin { width: 39px; height: 20px; display: flex; align-items: center; justify-content: center; border-right: 1px solid #999; }
.pin-first { width: 48px; padding-left: 8px; }
.tab { width: 238px; height: 34px; display: flex; align-items: center; padding: 0 12px; gap: 8px; color: #666; }
.tab-active { width: 240px; background: #fff; border-radius: 9px 9px 0 0; }
.tab-title { flex: 1; min-width: 0; overflow: hidden; }
.fade { -webkit-mask-image: linear-gradient(to right, #000 85%, transparent); mask-image: linear-gradient(to right, #000 85%, transparent); }
.tab-x { color: #555; }
.new-tab { margin-left: 16px; }
.win-controls { margin-left: auto; padding-right: 18px; display: flex; align-items: center; gap: 36px; }
.win-controls svg:nth-child(2) { margin-left: -4px; }
.toolbar { height: 37px; flex: none; display: flex; align-items: center; gap: 18px; padding: 0 20px 0 15px; background: #fff; border-bottom: 1px solid #ddd; }
.omnibox { flex: 1; height: 28px; border-radius: 14px; background: #f1f3f4; display: flex; align-items: center; justify-content: flex-end; padding-right: 10px; margin-left: 30px; margin-right: -6px; }
.avatar { width: 22px; height: 22px; border-radius: 50%; background: #741ba0; color: #fff; font-size: 12px; line-height: 22px; text-align: center; }
.viewport { flex: 1; min-height: 0; display: flex; }
.site { flex: 1; min-width: 0; background: #f0f1f3; display: flex; flex-direction: column; }
.site-bar { height: 50px; flex: none; border-top: 3px solid #f48024; background: #f9f9f9; box-shadow: 0 1px 4px #0003; }
.post { flex: 1; min-height: 0; width: 46%; margin-left: 345px; padding: 0 18px; background: #fff; box-shadow: 0 0 4px #0003; display: flex; flex-direction: column; justify-content: flex-end; overflow: hidden; }
.error { font-size: 11px; line-height: 16px; color: #d0393e; }
.hints { display: flex; align-items: center; gap: 7px; margin-top: 7px; font-size: 11px; line-height: 20px; color: #777b80; }
.hints b { font-weight: 600; }
.hints span:first-child { margin-right: -4px; }
kbd { font: inherit; line-height: 18px; border: 1px solid #222; border-radius: 3px; padding: 0 4px; background: #f1f2f3; color: #222; margin-right: -4px; }
.post h2 { font-size: 16px; font-weight: 600; line-height: 24px; margin: 23px 0 -10px; color: #222; }
.scroll { width: 17px; flex: none; background: #f1f1f1; display: flex; flex-direction: column; align-items: center; padding: 6px 0 8px; }
.arr-up { border: 4px solid transparent; border-top: 0; border-bottom: 5px solid #999; }
.arr-down { margin-top: auto; border: 4px solid transparent; border-bottom: 0; border-top: 5px solid #555; }
.scroll-thumb { width: 13px; height: 60%; background: #c1c1c1; margin-top: 5px; }

/* Taskbar */
.taskbar { height: 40px; flex: none; display: flex; color: #eee; background: linear-gradient(to right, #22353f 31%, #434749 38%, #414345 40%, #28292d 43%, #25262a 60%, #22262a 70%, #20262a 88%, #1b2744 94%, #1b2744); }
.start { width: 48px; display: flex; align-items: center; justify-content: center; }
.search { width: 344px; background: #f2f2f2; border: 1px solid #bbb; display: flex; align-items: center; gap: 11px; padding-left: 11px; color: #222; }
.search input { border: 0; background: none; width: 290px; font-size: 15px; padding: 0; outline: 0; }
.search input::placeholder { color: #333; opacity: 1; }
.apps { display: flex; gap: 1px; margin-left: 1px; }
.app { position: relative; width: 48px; display: flex; align-items: center; justify-content: center; }
.run::after { content: ""; position: absolute; left: 4px; right: 4px; bottom: 0; height: 2px; background: #76b9ed; }
.current { background: #66686a; }
.current::after { left: 0; right: 0; }
.count { position: absolute; right: 8px; bottom: 6px; background: #888; color: #fff; font-size: 8px; line-height: 11px; border-radius: 2px; padding: 0 1px; }
.ps-logo { position: relative; display: flex; }
.ps-text { position: absolute; inset: 0; display: flex; align-items: center; justify-content: center; color: #d8f2ff; font-size: 11px; font-weight: 600; }
.small .ps-text { font-size: 8px; }
.tray { margin-left: auto; display: flex; align-items: center; font-size: 14px; padding-right: 25px; }
.temp { margin: 0 8px 0 10px; }
.up { margin: 0 11px 0 9px; }
.lang { font-size: 12px; margin: 0 12px 0 10px; }
.clock { width: 54px; display: flex; flex-direction: column; align-items: center; font-size: 11px; line-height: 18px; margin-right: 19px; }
.notify { position: relative; }
.badge { position: absolute; left: 8px; top: 7px; width: 16px; height: 16px; border-radius: 50%; background: #333; border: 1px solid #999; font-size: 11px; line-height: 14px; text-align: center; }

/* Editor window */
.ps { position: absolute; top: 31px; bottom: 113px; left: 57px; right: 135px; display: flex; flex-direction: column; background: #535353; border: 1px solid #333; border-radius: 4px 4px 0 0; padding: 0 3px 3px; color: #e4e4e4; font-size: 10px; }
.menubar { height: 28px; flex: none; display: flex; align-items: center; padding-left: 5px; border-bottom: 1px solid #383838; }
.menu { display: flex; gap: 13px; margin-left: 14px; font-size: 11px; }
.ps-win { margin: 0 3px 0 auto; align-self: flex-start; display: flex; border: 1px solid #666; border-top: 0; border-radius: 0 0 4px 4px; }
.ps-win button { width: 28px; height: 20px; display: flex; align-items: center; justify-content: center; border-left: 1px solid #666; }
.ps-win button:first-child { border-left: 0; }
.ps-win .wide { width: 47px; }
.options { height: 34px; flex: none; display: flex; align-items: center; border-bottom: 1px solid #383838; }
.vgrip { width: 3px; height: 20px; margin-left: 4px; background: repeating-linear-gradient(#444 0 1px, #535353 1px 2px); }
.sep { width: 1px; height: 22px; background: #3c3c3c; }
.home { padding: 0 16px 0 12px; }
.mar { display: flex; align-items: center; gap: 8px; padding: 0 8px; }
.dim { color: #999; }
.modes { display: flex; padding: 0 7px; }
.modes button { width: 26px; height: 26px; display: flex; align-items: center; justify-content: center; }
.modes .on, .tool.on { background: #383838; border: 1px solid #666; border-radius: 3px; }
.opt { display: flex; align-items: center; gap: 5px; margin-left: 12px; }
.field { height: 18px; min-width: 0; background: #454545; border: 1px solid #666; padding: 0 3px; }
.field:disabled { border-color: #5e5e5e; color: #777; background: #4a4a4a; }
.w52 { width: 52px; } .w36 { width: 36px; } .w112 { width: 112px; }
.smooth { margin: 0 10px; color: #777; }
.smooth input { appearance: none; width: 9px; height: 9px; margin: 0; border: 1px solid #444; border-radius: 2px; background: #4c4c4c; }
.off { color: #888; gap: 4px; }
.swap { margin: 0 6px 0 16px; }
.off + .sep { margin: 0 10px 0 9px; }
.drop { appearance: none; height: 21px; padding: 0 16px 0 7px; border: 1px solid #666; border-radius: 3px; color: #eee; background: #454545 url("data:image/svg+xml,%3Csvg xmlns='http://www.w3.org/2000/svg' width='8' height='5'%3E%3Cpath d='M.5 .5L4 4L7.500 .5' fill='none' stroke='%23bbb'/%3E%3C/svg%3E") no-repeat right 3px center; }
.drop:disabled { color: #777; opacity: 1; border-color: #5e5e5e; background-color: #4a4a4a; }
.mask { height: 23px; padding: 0 12px; background: #454545; border: 1px solid #666; border-radius: 3px; }
.opt-right { margin-left: auto; display: flex; align-items: center; gap: 15px; padding-right: 9px; color: #ddd; }
.ws { margin: 0 -4px 0 -5px; color: #999; }

.work { flex: 1; min-height: 0; display: grid; grid-template-columns: 71px 1fr 37px 333px 111px; grid-template-rows: minmax(0, 1fr); gap: 3px; background: #3c3c3c; border-bottom: 1px solid #383838; }
.tools, .strip, .side { background: #535353; overflow: hidden; }
.collapse { height: 12px; flex: none; background: #424242; border-bottom: 1px solid #383838; display: flex; align-items: center; justify-content: center; }
.strip .collapse { justify-content: flex-end; padding-right: 5px; }
.collapse.left { justify-content: flex-start; padding-left: 6px; }
.collapse.right { justify-content: flex-end; padding-right: 6px; }
.grip { width: 20px; height: 4px; margin: 3px auto; background: repeating-linear-gradient(to right, #3c3c3c 0 1px, #535353 1px 2px); }
.tools .grip { margin-bottom: 9px; }
.toolgrid { display: grid; grid-template-columns: 33px 33px; grid-auto-rows: 26px; margin-left: 3px; }
.tool { position: relative; display: flex; align-items: center; justify-content: center; }
.tool::after { content: ""; position: absolute; right: 3px; bottom: 4px; border: 2px solid transparent; border-right-color: #bbb; border-bottom-color: #bbb; }
.tool.plain::after { display: none; }
.swatches { margin: 6px 0 3px 17px; }

.doc { min-width: 0; display: flex; flex-direction: column; }
.doc-tabs { height: 29px; flex: none; background: #424242; border-bottom: 1px solid #383838; display: flex; }
.doc-tab { width: 239px; display: flex; align-items: center; justify-content: space-between; padding: 0 11px 0 10px; background: #535353; border-right: 1px solid #383838; font-weight: 600; font-size: 11px; }
.doc-tab svg { color: #aaa; }
.doc-main { flex: 1; min-height: 0; display: flex; }
.canvas { position: relative; flex: 1; min-width: 0; overflow: hidden; background: #18c2a7; }
.guides { position: absolute; inset: 0; background: linear-gradient(to right, #4bf6ff 1px, transparent 1px 20px, #4bf6ff 20px 21px, transparent 21px) 160px 0 / 280px 100%; }
.artboard { width: 1440px; margin-left: -268px; height: 100%; font-family: Roboto, sans-serif; color: #fff; text-align: center; }
.hero { height: 590px; background: #87509c; }
.site-head { display: flex; align-items: center; justify-content: space-between; padding: 47px 180px 0 228px; }
.logo { width: 100px; text-align: right; font: italic 900 44px/48px Lato, sans-serif; -webkit-text-stroke: 2px #fff; }
.site-nav { display: flex; gap: 13px; font-size: 15px; line-height: 32px; }
.site-nav a { padding: 0 16px; border-radius: 4px; }
.home-link { background: #643a7c; }
.hero h1 { margin-top: 130px; font-size: 41px; line-height: 49px; font-weight: 600; color: #f8f3ea; }
.cta { margin-top: 52px; width: 293px; height: 70px; border-radius: 4px; background: #eb7d4b; border-bottom: 4px solid #c86a40; font-size: 18px; font-weight: 500; }
.services { padding-top: 109px; background: #18c2a7; }
.services h2 { font-size: 38px; line-height: 50px; font-weight: 700; letter-spacing: 4px; }
.services hr { width: 87px; height: 4px; margin: 10px auto; border: 0; background: #19a58f; }
.services p { font-size: 18px; line-height: 26px; padding-top: 8px; }
.vscroll { width: 16px; flex: none; background: #484848; display: flex; flex-direction: column; align-items: center; padding: 7px 0; color: #888; }
.vthumb { width: 12px; height: 85px; margin-top: 79px; background: #686868; }
.vscroll .last { margin-top: auto; }
.status { height: 16px; flex: none; display: flex; align-items: center; background: #484848; }
.zoom { width: 48px; padding-left: 11px; }
.dims { width: 184px; height: 16px; display: flex; align-items: center; justify-content: space-between; padding: 0 5px 0 11px; background: #535353; }
.hscroll { flex: 1; display: flex; align-items: center; justify-content: space-between; padding: 0 24px 0 8px; }
.hthumb { width: 283px; height: 12px; background: #686868; margin-left: 60px; }

.dock { height: 41px; border-bottom: 1px solid #383838; overflow: hidden; }
.strip .dock > svg { margin: 5px auto 0; }
.glyph-a { display: block; text-align: center; font: italic 18px/24px "DejaVu Serif", serif; }
.side-btn { display: flex; align-items: center; gap: 10px; padding-left: 11px; height: 26px; font-weight: 600; }

.panels { min-width: 0; min-height: 0; display: flex; flex-direction: column; gap: 3px; }
.panels > .collapse { margin-bottom: -3px; }
.panel { background: #535353; flex: none; }
.tabs { height: 28px; display: flex; align-items: stretch; background: #424242; border-bottom: 1px solid #383838; }
.tabs button { padding: 0 8px 2px 9px; border-right: 1px solid #383838; color: #999; font-weight: 600; }
.tabs .on { background: #535353; color: #fff; margin-bottom: -1px; }
.tabs svg { margin: auto 5px auto auto; }
.picker { height: 240px; display: flex; align-items: flex-start; padding: 7px 0 0 9px; }
.picker-sw { margin-right: 4px; }
.field2d { position: relative; width: 236px; height: 213px; background: linear-gradient(to top, #000, transparent), linear-gradient(to right, #fff, #a800ff); }
.dot { position: absolute; left: 52%; top: 52%; width: 11px; height: 11px; margin: -5px -6px; border: 1px solid #fff; border-radius: 50%; }
.hue-arrow { margin: 37px 1px 0 7px; }
.hue { width: 19px; height: 213px; background: linear-gradient(#f00, #f0f 17%, #00f 33%, #0ff 50%, #0f0 67%, #ff0 83%, #f00); }
.kind { height: 36px; display: flex; align-items: center; gap: 5px; padding: 2px 0 0 10px; border-bottom: 1px solid #404040; color: #ccc; }
.kind-icon { width: 24px; height: 24px; display: flex; align-items: center; justify-content: center; background: #353535; border: 1px solid #666; border-radius: 3px; }
.props { height: 246px; }
.props-body { height: 157px; display: flex; }
.props-list { flex: 1; }
.props h3 { display: flex; align-items: center; gap: 7px; padding: 0 0 2px 6px; height: 29px; font-weight: 600; color: #eee; }
.props h3 svg { color: #bbb; }
.xy { display: grid; grid-template-columns: 37px 12px 53px 33px 53px; grid-template-rows: 18px 18px 24px; gap: 7px 5px; align-items: center; height: 87px; color: #888; }
.xy label { text-align: right; }
.chain { grid-row: 1 / 3; justify-self: end; margin-right: 12px; }
.angle { grid-column: 2; justify-self: end; }
.angle-sel { height: 18px; padding: 0 3px; }
.flip { grid-column: 4 / 6; justify-self: start; margin-left: 43px; }
.second { border-top: 1px solid #404040; }
.align { padding: 0 9px; color: #ccc; }
.slim { width: 16px; }
.slim .t1 { height: 61px; margin-top: 4px; }
.slim .t2 { height: 142px; margin-top: 4px; }
.layers { flex: 1; min-height: 0; display: flex; flex-direction: column; }
.layers .tabs { flex: none; }
.lrow { height: 28px; flex: none; display: flex; align-items: center; justify-content: space-between; padding: 0 5px 0 4px; border-bottom: 1px solid #404040; color: #bbb; }
.filter { height: 32px; padding-top: 4px; }
.kindsel { position: relative; color: #ddd; }
.kindsel svg { position: absolute; left: 8px; top: 5px; }
.kindsel .drop { width: 121px; padding-left: 22px; }
.filters { display: flex; align-items: center; gap: 13px; }
.blend > .drop { width: 184px; }
.pct { display: flex; align-items: center; gap: 4px; }
.pct .drop { width: 51px; height: 18px; padding: 0 5px; background-image: linear-gradient(to right, transparent 36px, #666 36px 37px, transparent 37px), url("data:image/svg+xml,%3Csvg xmlns='http://www.w3.org/2000/svg' width='8' height='5'%3E%3Cpath d='M.5 .5L4 4L7.500 .5' fill='none' stroke='%23bbb'/%3E%3C/svg%3E"); background-position: 0 0, right 3px center; }
.lock { border-bottom: 0; padding-left: 6px; padding-bottom: 3px; height: 30px; }
.locks { display: flex; align-items: center; gap: 9px; margin: 0 auto 0 8px; }
.layer-area { flex: 1; min-height: 0; display: flex; overflow: hidden; }
.layer-list { flex: 1; list-style: none; overflow: hidden; }
.layer-list li { height: 25px; display: flex; align-items: center; border-bottom: 2px solid #4a4a4a; }
.vis { width: 30px; height: 100%; padding-left: 9px; display: flex; align-items: center; border-right: 1px solid #4a4a4a; margin-right: 5px; background: #535353; }
.fold { margin: 0 11px 0 5px; }
.layer-list .selected { height: 41px; background: #6a6a6a; }
.selected .vis { width: 31px; margin-right: 1px; }
.thumb { margin-right: 7px; }
.layer-foot { height: 25px; flex: none; border-top: 1px solid #383838; display: flex; align-items: center; justify-content: flex-end; gap: 15px; padding-right: 28px; }
.layer-foot em { font: italic 15px/16px "Liberation Sans", sans-serif; margin-right: -2px; }

.watermark { position: absolute; right: 74px; bottom: 89px; display: flex; flex-direction: column; width: 455px; color: #8d8d8d99; pointer-events: none; font-size: 14px; line-height: 20px; }
.watermark strong { font-weight: 400; font-size: 19px; line-height: 24px; }
```
